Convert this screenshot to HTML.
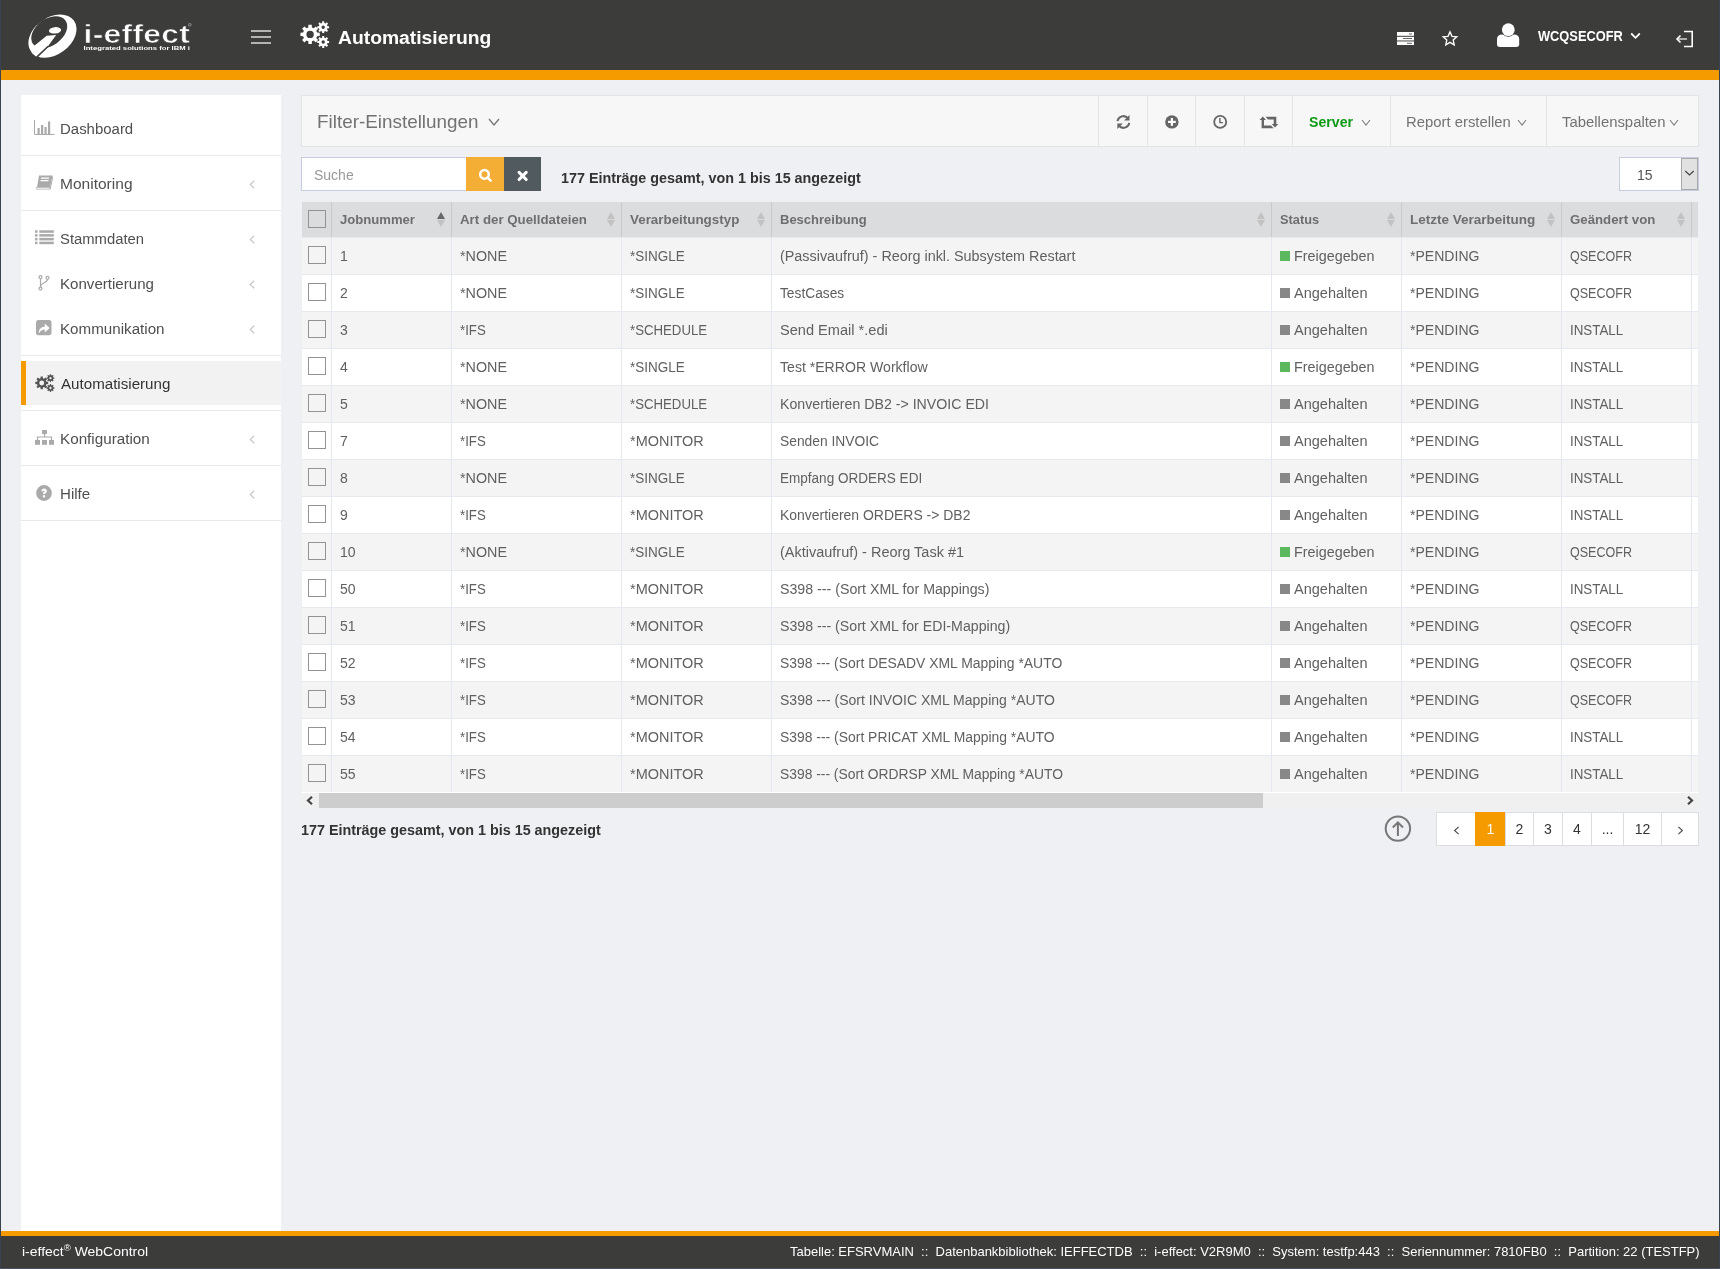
<!DOCTYPE html><html><head><meta charset="utf-8"><title>i-effect WebControl</title><style>
*{margin:0;padding:0;box-sizing:border-box}
html,body{width:1720px;height:1269px;overflow:hidden;background:#eff0f4;font-family:"Liberation Sans",sans-serif;position:relative}
body{will-change:transform}
.abs{position:absolute}
.frameL{position:absolute;left:0;top:0;width:1px;height:1269px;background:#3a4250;z-index:50}
.frameR{position:absolute;left:1719px;top:0;width:1px;height:1269px;background:#3a4250;z-index:50}
.frameB{position:absolute;left:0;top:1268px;width:1720px;height:1px;background:#4a5260;z-index:50}
#hdr{position:absolute;left:0;top:0;width:1720px;height:70px;background:#3c3c3b}
#hbar{position:absolute;left:0;top:70px;width:1720px;height:10px;background:#f59b00}
.htitle{position:absolute;left:338px;top:27px;font-size:18px;font-weight:bold;color:#fff;line-height:22px;white-space:nowrap}
.huser{position:absolute;left:1538px;top:26px;font-size:14px;font-weight:bold;color:#fff;line-height:20px;white-space:nowrap}
#side{position:absolute;left:21px;top:95px;width:260px;height:1136px;background:#fff}
.sep{position:absolute;left:0;width:260px;height:1px;background:#e9e9e9}
.sitem{position:absolute;left:39px;font-size:14px;color:#4f4f4f;line-height:18px;white-space:nowrap}
.sarr{position:absolute;left:228px;width:6px;height:9px}
.sico{position:absolute}
#act{position:absolute;left:0;top:266px;width:260px;height:44px;background:#f2f2f2;border-left:5px solid #f59b00}
#filt{position:absolute;left:301px;top:95px;width:1398px;height:52px;background:#f7f7f7;border:1px solid #e4e4e4}
.fdiv{position:absolute;top:0;width:1px;height:50px;background:#e4e4e4}
.ftxt{position:absolute;font-size:14px;color:#727272;line-height:18px;white-space:nowrap}
.chev{position:absolute}
#srch{position:absolute;left:301px;top:157px;width:166px;height:34px;background:#fff;border:1px solid #c6cddd}
.ph{position:absolute;left:12px;top:8px;font-size:14px;color:#999;line-height:18px}
#sbtn{position:absolute;left:466px;top:157px;width:38px;height:34px;background:#f5ae35}
#xbtn{position:absolute;left:504px;top:157px;width:37px;height:34px;background:#515a5f}
.info{position:absolute;font-size:14px;font-weight:bold;color:#333;line-height:18px;white-space:nowrap}
#sel{position:absolute;left:1619px;top:157px;width:80px;height:34px;background:#fff;border:1px solid #c6cddd}
.tbl{position:absolute;left:0;top:0}
.th{position:absolute;left:302px;width:1396px;height:35px;background:#dbdcde}
.thd{position:absolute;top:202px;width:1px;height:35px;background:#cacaca}
.htx{position:absolute;top:211px;font-size:13px;font-weight:bold;color:#6e6e6e;line-height:18px;white-space:nowrap}
.sup,.sdn{position:absolute;width:0;height:0;border-left:4.5px solid transparent;border-right:4.5px solid transparent}
.sup{top:212px;border-bottom:7px solid #c2c2c2}
.sup.act{border-bottom-color:#666}
.sdn{top:220px;border-top:7px solid #c2c2c2}
.cb{position:absolute;width:18px;height:18px;border:1px solid #939393;background:transparent}
.hcb{background:#dbdcde}
.row{position:absolute;left:302px;width:1396px;height:37px;border-top:1px solid #e6eaf0}
.row.odd{background:#f4f4f4}
.row.even{background:#fff}
.td{position:absolute;top:9px;font-size:14px;color:#606060;line-height:18px;white-space:nowrap}
.vd{position:absolute;top:-1px;width:1px;height:37px;background:#e5e9ef}
.sq{position:absolute;top:13px;width:10px;height:10px}
.sq.g{background:#5cb85c}
.sq.k{background:#888}
#scr{position:absolute;left:301px;top:792px;width:1398px;height:17px;background:#f0f0f0;border-top:1px solid #fff}
#thumb{position:absolute;left:18px;top:0;width:944px;height:15px;background:#cdcdcd}
.pg{position:absolute;top:812px;height:34px;border:1px solid #ddd;background:#fff;color:#333;font-size:14px;line-height:32px;text-align:center}
.pg.on{background:#f59b00;border-color:#f59b00;color:#fff}
#ftbar{position:absolute;left:0;top:1231px;width:1720px;height:5px;background:#f59b00}
#ft{position:absolute;left:0;top:1236px;width:1720px;height:33px;background:#3c3c3b}
.fttx{position:absolute;top:8px;font-size:13px;color:#fff;line-height:16px;white-space:nowrap}

</style></head><body>
<div class="frameL"></div><div class="frameR"></div><div class="frameB"></div>
<div id="hdr">
<svg class="abs" style="left:24px;top:12px" width="58" height="48" viewBox="0 0 1533 1269">
<ellipse cx="752" cy="636" rx="700" ry="492" transform="rotate(-36 752 636)" fill="#fff"/>
<ellipse cx="667" cy="535" rx="530" ry="350" transform="rotate(-36 667 535)" fill="#3c3c3b"/>
<path d="M350,345 L150,300 L420,40 L585,172 Z" fill="#3c3c3b"/>
<path d="M290,880 L600,625 L850,610 L620,925 L330,1190 L200,1080 Z" fill="#fff"/>
<path d="M640,905 L330,1200" stroke="#3c3c3b" stroke-width="42"/>
<ellipse cx="820" cy="485" rx="162" ry="85" transform="rotate(-6 820 485)" fill="#fff"/>
</svg>
<svg class="abs" style="left:80px;top:18px" width="120" height="36" viewBox="0 0 120 36">
<text x="2.8" y="24.7" transform="scale(1.25,1)" font-family="Liberation Sans" font-weight="bold" font-size="25.5" fill="#fff" stroke="#3c3c3b" stroke-width="0.6" textLength="85.2" lengthAdjust="spacing">i-effect</text>
<circle cx="109.8" cy="6.8" r="1.3" fill="none" stroke="#ddd" stroke-width="0.5"/>
<text x="3.5" y="31.9" font-family="Liberation Sans" font-weight="bold" font-size="5.4" fill="#fff" textLength="106.5" lengthAdjust="spacingAndGlyphs">Integrated solutions for IBM i</text>
</svg>

<div class="abs" style="left:251px;top:30px;width:20px;height:2px;background:#b4b4b4"></div>
<div class="abs" style="left:251px;top:36px;width:20px;height:2px;background:#b4b4b4"></div>
<div class="abs" style="left:251px;top:42px;width:20px;height:2px;background:#b4b4b4"></div>
<svg class="abs" style="left:300px;top:21px" width="30" height="27" viewBox="0 0 30 27"><path fill-rule="evenodd" fill="#fff" d="M17.07,11.61 L19.75,11.72 L19.75,15.08 L17.07,15.19 L16.30,17.07 L18.12,19.04 L15.74,21.42 L13.77,19.60 L11.89,20.37 L11.78,23.05 L8.42,23.05 L8.31,20.37 L6.43,19.60 L4.46,21.42 L2.08,19.04 L3.90,17.07 L3.13,15.19 L0.45,15.08 L0.45,11.72 L3.13,11.61 L3.90,9.73 L2.08,7.76 L4.46,5.38 L6.43,7.20 L8.31,6.43 L8.42,3.75 L11.78,3.75 L11.89,6.43 L13.77,7.20 L15.74,5.38 L18.12,7.76 L16.30,9.73Z M13.80,13.40 A3.7,3.7 0 1 0 6.40,13.40 A3.7,3.7 0 1 0 13.80,13.40Z M27.47,5.14 L29.12,5.21 L29.12,7.19 L27.47,7.26 L26.97,8.47 L28.08,9.69 L26.69,11.08 L25.47,9.97 L24.26,10.47 L24.19,12.12 L22.21,12.12 L22.14,10.47 L20.93,9.97 L19.71,11.08 L18.32,9.69 L19.43,8.47 L18.93,7.26 L17.28,7.19 L17.28,5.21 L18.93,5.14 L19.43,3.93 L18.32,2.71 L19.71,1.32 L20.93,2.43 L22.14,1.93 L22.21,0.28 L24.19,0.28 L24.26,1.93 L25.47,2.43 L26.69,1.32 L28.08,2.71 L26.97,3.93Z M24.90,6.20 A1.7,1.7 0 1 0 21.50,6.20 A1.7,1.7 0 1 0 24.90,6.20Z M27.47,19.94 L29.12,20.01 L29.12,21.99 L27.47,22.06 L26.97,23.27 L28.08,24.49 L26.69,25.88 L25.47,24.77 L24.26,25.27 L24.19,26.92 L22.21,26.92 L22.14,25.27 L20.93,24.77 L19.71,25.88 L18.32,24.49 L19.43,23.27 L18.93,22.06 L17.28,21.99 L17.28,20.01 L18.93,19.94 L19.43,18.73 L18.32,17.51 L19.71,16.12 L20.93,17.23 L22.14,16.73 L22.21,15.08 L24.19,15.08 L24.26,16.73 L25.47,17.23 L26.69,16.12 L28.08,17.51 L26.97,18.73Z M24.90,21.00 A1.7,1.7 0 1 0 21.50,21.00 A1.7,1.7 0 1 0 24.90,21.00Z"/></svg>
<div id="t1" class="htitle" style=";transform:scaleX(1.0718);transform-origin:0 50%">Automatisierung</div>
<svg class="abs" style="left:1397px;top:32px" width="18" height="13" viewBox="0 0 18 13">
<rect x="0" y="0" width="17" height="3.8" fill="#fff"/><rect x="0" y="4.8" width="17" height="3.6" fill="#fff"/>
<rect x="0" y="8.4" width="17" height="1.3" fill="#aaa"/><rect x="0" y="9.7" width="17" height="3.3" fill="#fff"/>
<rect x="12" y="1.5" width="3" height="0.9" fill="#555"/><rect x="6" y="6.1" width="9" height="0.9" fill="#555"/><rect x="10" y="10.8" width="5" height="0.9" fill="#555"/>
</svg>
<svg class="abs" style="left:1441px;top:30px" width="18" height="17" viewBox="0 0 18 17">
<path d="M9,1.9 L11,6.3 L15.8,6.8 L12.2,10 L13.2,14.8 L9,12.3 L4.8,14.8 L5.8,10 L2.2,6.8 L7,6.3 Z" fill="none" stroke="#fff" stroke-width="1.35" stroke-linejoin="miter"/>
</svg>
<svg class="abs" style="left:1496px;top:23px" width="24" height="25" viewBox="0 0 24 25">
<path d="M1,16.2 C1,13.2 3,11.6 6,11.6 L18.2,11.6 C21.2,11.6 23.2,13.2 23.2,16.2 L23.2,21.6 C23.2,23.1 22,24.1 20.5,24.1 L3.7,24.1 C2.2,24.1 1,23.1 1,21.6 Z" fill="#fff"/>
<circle cx="12.3" cy="6.7" r="7.1" fill="#3c3c3b"/><circle cx="12.3" cy="6.7" r="6.4" fill="#fff"/>
</svg>
<div id="t2" class="huser" style=";transform:scaleX(0.9163);transform-origin:0 50%">WCQSECOFR</div>
<svg class="abs" style="left:1630px;top:32px" width="11" height="8" viewBox="0 0 11 8"><path d="M1.2,1.5 L5.5,5.8 L9.8,1.5" fill="none" stroke="#fff" stroke-width="1.8"/></svg>
<svg class="abs" style="left:1675px;top:30px" width="20" height="18" viewBox="0 0 20 18">
<path d="M9,1.5 L17.2,1.5 L17.2,16.5 L9,16.5" fill="none" stroke="#fff" stroke-width="1.6"/>
<path d="M2,9 L12,9" stroke="#ccc" stroke-width="1.6"/><path d="M5.5,5.5 L2,9 L5.5,12.5" fill="none" stroke="#fff" stroke-width="1.6"/>
</svg>
</div><div id="hbar"></div>
<div id="side">
<div class="sep" style="top:60px"></div>
<div class="sep" style="top:115px"></div>
<div class="sep" style="top:260px"></div>
<div class="sep" style="top:315px"></div>
<div class="sep" style="top:370px"></div>
<div class="sep" style="top:425px"></div>
<div id="act"></div>
<div id="t3" class="sitem" style="top:25px;transform:scaleX(1.0687);transform-origin:0 50%">Dashboard</div>
<div id="t4" class="sitem" style="top:80px;transform:scaleX(1.1094);transform-origin:0 50%">Monitoring</div>
<svg class="sarr" style="top:85px" width="6" height="9" viewBox="0 0 6 9"><path d="M5.2,0.7 L1.2,4.5 L5.2,8.3" fill="none" stroke="#c8c8c8" stroke-width="1.2"/></svg>
<div id="t5" class="sitem" style="top:135px;transform:scaleX(1.0596);transform-origin:0 50%">Stammdaten</div>
<svg class="sarr" style="top:140px" width="6" height="9" viewBox="0 0 6 9"><path d="M5.2,0.7 L1.2,4.5 L5.2,8.3" fill="none" stroke="#c8c8c8" stroke-width="1.2"/></svg>
<div id="t6" class="sitem" style="top:180px;transform:scaleX(1.0780);transform-origin:0 50%">Konvertierung</div>
<svg class="sarr" style="top:185px" width="6" height="9" viewBox="0 0 6 9"><path d="M5.2,0.7 L1.2,4.5 L5.2,8.3" fill="none" stroke="#c8c8c8" stroke-width="1.2"/></svg>
<div id="t7" class="sitem" style="top:225px;transform:scaleX(1.0832);transform-origin:0 50%">Kommunikation</div>
<svg class="sarr" style="top:230px" width="6" height="9" viewBox="0 0 6 9"><path d="M5.2,0.7 L1.2,4.5 L5.2,8.3" fill="none" stroke="#c8c8c8" stroke-width="1.2"/></svg>
<div id="t8" class="sitem" style="top:335px;transform:scaleX(1.0877);transform-origin:0 50%">Konfiguration</div>
<svg class="sarr" style="top:340px" width="6" height="9" viewBox="0 0 6 9"><path d="M5.2,0.7 L1.2,4.5 L5.2,8.3" fill="none" stroke="#c8c8c8" stroke-width="1.2"/></svg>
<div id="t9" class="sitem" style="top:390px;transform:scaleX(1.0783);transform-origin:0 50%">Hilfe</div>
<svg class="sarr" style="top:395px" width="6" height="9" viewBox="0 0 6 9"><path d="M5.2,0.7 L1.2,4.5 L5.2,8.3" fill="none" stroke="#c8c8c8" stroke-width="1.2"/></svg>
<div id="t10" class="sitem" style="top:280px;left:40px;color:#333;transform:scaleX(1.0812);transform-origin:0 50%">Automatisierung</div>
<svg class="sico" style="left:13px;top:25px" width="21" height="15" viewBox="0 0 21 15">
<path d="M0.5,0 L0.5,14.5 L20.5,14.5" fill="none" stroke="#aaa" stroke-width="1"/>
<rect x="3.5" y="8" width="2.2" height="6" fill="#aaa"/><rect x="7" y="5" width="2.2" height="9" fill="#aaa"/><rect x="10.5" y="7" width="2.2" height="7" fill="#aaa"/><rect x="14" y="1.5" width="2.2" height="12.5" fill="#aaa"/>
</svg>
<svg class="sico" style="left:14px;top:80px" width="19" height="16" viewBox="0 0 19 16">
<path d="M4,0.5 L17.5,0.5 L15,12.5 L2,12.5 Z" fill="#aaa"/>
<path d="M2,12.5 L15,12.5 L17.5,1 L18.2,2 L15.6,14.6 L1.6,14.6 C0.6,14.6 0.6,13 1.2,12 Z" fill="#aaa"/>
<path d="M1.2,13.6 L14.6,13.6" stroke="#fff" stroke-width="0.8"/>
<rect x="6" y="2.5" width="8" height="1.3" fill="#fff"/><rect x="5.5" y="5" width="8" height="1.3" fill="#fff"/>
</svg>
<svg class="sico" style="left:14px;top:135px" width="19" height="15" viewBox="0 0 19 15">
<rect x="0" y="0.3" width="2.5" height="2.5" fill="#aaa"/><rect x="0" y="4.1" width="2.5" height="2.5" fill="#aaa"/><rect x="0" y="7.9" width="2.5" height="2.5" fill="#aaa"/><rect x="0" y="11.7" width="2.5" height="2.5" fill="#aaa"/>
<rect x="4.3" y="0.3" width="14.5" height="2.5" fill="#aaa"/><rect x="4.3" y="4.1" width="14.5" height="2.5" fill="#aaa"/><rect x="4.3" y="7.9" width="14.5" height="2.5" fill="#aaa"/><rect x="4.3" y="11.7" width="14.5" height="2.5" fill="#aaa"/>
</svg>
<svg class="sico" style="left:17px;top:180px" width="12" height="16" viewBox="0 0 12 16">
<g fill="none" stroke="#aaa" stroke-width="1.2">
<circle cx="2.5" cy="2.2" r="1.5"/><circle cx="2.5" cy="13.6" r="1.5"/><circle cx="9.5" cy="2.8" r="1.5"/>
<path d="M2.5,3.7 L2.5,12.1"/><path d="M9.5,4.3 C9.5,8 2.8,8 2.5,11"/>
</g></svg>
<svg class="sico" style="left:15px;top:225px" width="16" height="16" viewBox="0 0 16 16">
<rect x="0" y="0" width="15.5" height="15.2" rx="2.6" fill="#aaa"/>
<path d="M2.8,13.4 C2.8,9 5,6.8 8.8,6.8 L8.8,3.6 L13.6,8 L8.8,12.4 L8.8,9.4 C6.2,9.4 4.3,10.6 2.8,13.4 Z" fill="#fff"/>
</svg>

<svg class="sico" style="left:14px;top:335px" width="19" height="15" viewBox="0 0 19 15">
<rect x="7" y="0" width="5" height="4" fill="#aaa"/>
<path d="M9.5,4 L9.5,7 M2.5,10 L2.5,7 L16.5,7 L16.5,10" fill="none" stroke="#aaa" stroke-width="1.2"/>
<rect x="0" y="10" width="5" height="4.8" fill="#aaa"/><rect x="7" y="10" width="5" height="4.8" fill="#aaa"/><rect x="14" y="10" width="5" height="4.8" fill="#aaa"/>
</svg>
<svg class="sico" style="left:15px;top:390px" width="16" height="16" viewBox="0 0 16 16">
<circle cx="8" cy="8" r="7.9" fill="#aaa"/>
<path d="M5.4,6.2 C5.4,4.5 6.6,3.6 8.1,3.6 C9.7,3.6 10.9,4.6 10.9,6 C10.9,7.6 9.2,7.9 9.2,9.1 L6.9,9.1 C6.9,7.3 8.6,7 8.6,6.1 C8.6,5.6 8.3,5.4 8,5.4 C7.5,5.4 7.3,5.8 7.3,6.4 Z" fill="#fff"/>
<rect x="6.9" y="10.2" width="2.3" height="2.2" fill="#fff"/>
</svg>

<svg class="sico" style="left:14px;top:279px" width="20" height="18" viewBox="0 0 30 27"><path fill-rule="evenodd" fill="#555" d="M17.07,11.61 L19.75,11.72 L19.75,15.08 L17.07,15.19 L16.30,17.07 L18.12,19.04 L15.74,21.42 L13.77,19.60 L11.89,20.37 L11.78,23.05 L8.42,23.05 L8.31,20.37 L6.43,19.60 L4.46,21.42 L2.08,19.04 L3.90,17.07 L3.13,15.19 L0.45,15.08 L0.45,11.72 L3.13,11.61 L3.90,9.73 L2.08,7.76 L4.46,5.38 L6.43,7.20 L8.31,6.43 L8.42,3.75 L11.78,3.75 L11.89,6.43 L13.77,7.20 L15.74,5.38 L18.12,7.76 L16.30,9.73Z M13.80,13.40 A3.7,3.7 0 1 0 6.40,13.40 A3.7,3.7 0 1 0 13.80,13.40Z M27.47,5.14 L29.12,5.21 L29.12,7.19 L27.47,7.26 L26.97,8.47 L28.08,9.69 L26.69,11.08 L25.47,9.97 L24.26,10.47 L24.19,12.12 L22.21,12.12 L22.14,10.47 L20.93,9.97 L19.71,11.08 L18.32,9.69 L19.43,8.47 L18.93,7.26 L17.28,7.19 L17.28,5.21 L18.93,5.14 L19.43,3.93 L18.32,2.71 L19.71,1.32 L20.93,2.43 L22.14,1.93 L22.21,0.28 L24.19,0.28 L24.26,1.93 L25.47,2.43 L26.69,1.32 L28.08,2.71 L26.97,3.93Z M24.90,6.20 A1.7,1.7 0 1 0 21.50,6.20 A1.7,1.7 0 1 0 24.90,6.20Z M27.47,19.94 L29.12,20.01 L29.12,21.99 L27.47,22.06 L26.97,23.27 L28.08,24.49 L26.69,25.88 L25.47,24.77 L24.26,25.27 L24.19,26.92 L22.21,26.92 L22.14,25.27 L20.93,24.77 L19.71,25.88 L18.32,24.49 L19.43,23.27 L18.93,22.06 L17.28,21.99 L17.28,20.01 L18.93,19.94 L19.43,18.73 L18.32,17.51 L19.71,16.12 L20.93,17.23 L22.14,16.73 L22.21,15.08 L24.19,15.08 L24.26,16.73 L25.47,17.23 L26.69,16.12 L28.08,17.51 L26.97,18.73Z M24.90,21.00 A1.7,1.7 0 1 0 21.50,21.00 A1.7,1.7 0 1 0 24.90,21.00Z"/></svg>
</div>
<div id="filt">
<div class="fdiv" style="left:796px"></div>
<div class="fdiv" style="left:845px"></div>
<div class="fdiv" style="left:893px"></div>
<div class="fdiv" style="left:942px"></div>
<div class="fdiv" style="left:990px"></div>
<div class="fdiv" style="left:1088px"></div>
<div class="fdiv" style="left:1244px"></div>
<div id="t11" class="ftxt" style="left:15px;top:14px;font-size:19px;line-height:24px;transform:scaleX(0.9932);transform-origin:0 50%">Filter-Einstellungen</div>
<svg class="chev" style="left:186px;top:22px" width="12" height="8" viewBox="0 0 12 8"><path d="M1,1 L6.0,7 L11,1" fill="none" stroke="#777" stroke-width="1.35"/></svg>
<div id="t12" class="ftxt" style="left:1007px;top:17px;font-weight:bold;color:#0f9a16;transform:scaleX(1.0094);transform-origin:0 50%">Server</div>
<svg class="chev" style="left:1059px;top:23px" width="10" height="7" viewBox="0 0 10 7"><path d="M1,1 L5.0,6 L9,1" fill="none" stroke="#808080" stroke-width="1.15"/></svg>
<div id="t13" class="ftxt" style="left:1104px;top:17px;transform:scaleX(1.0609);transform-origin:0 50%">Report erstellen</div>
<svg class="chev" style="left:1215px;top:23px" width="10" height="7" viewBox="0 0 10 7"><path d="M1,1 L5.0,6 L9,1" fill="none" stroke="#808080" stroke-width="1.15"/></svg>
<div id="t14" class="ftxt" style="left:1260px;top:17px;transform:scaleX(1.0629);transform-origin:0 50%">Tabellenspalten</div>
<svg class="chev" style="left:1367px;top:23px" width="10" height="7" viewBox="0 0 10 7"><path d="M1,1 L5.0,6 L9,1" fill="none" stroke="#808080" stroke-width="1.15"/></svg>
<svg class="abs" style="left:813px;top:18px" width="17" height="16" viewBox="0 0 17 16">
<g fill="none" stroke="#666" stroke-width="2">
<path d="M2.5,7.2 A6,6 0 0 1 13,4.3"/><path d="M14.3,8.8 A6,6 0 0 1 3.8,11.7"/></g>
<path d="M14.5,1 L14.5,6.5 L9,6.5 Z" fill="#666"/><path d="M2.3,15 L2.3,9.5 L7.8,9.5 Z" fill="#666"/>
</svg>
<svg class="abs" style="left:862px;top:18px" width="16" height="16" viewBox="0 0 16 16">
<circle cx="7.9" cy="7.9" r="6.7" fill="#666"/><rect x="6.8" y="4" width="2.2" height="7.8" fill="#fff"/><rect x="4" y="6.8" width="7.8" height="2.2" fill="#fff"/>
</svg>
<svg class="abs" style="left:910px;top:18px" width="16" height="16" viewBox="0 0 16 16">
<circle cx="8.2" cy="7.9" r="6" fill="none" stroke="#666" stroke-width="1.8"/><path d="M7.9,4 L7.9,8.6 L11,8.6" fill="none" stroke="#666" stroke-width="1.4"/>
</svg>
<svg class="abs" style="left:957px;top:20px" width="20" height="13" viewBox="0 0 20 13">
<path d="M0.5,4 L3.8,0.6 L7,4 L5,4 L5,9.6 L12,9.6 L14.6,12.3 L2.6,12.3 L2.6,4 Z" fill="#666"/>
<path d="M6.5,0.8 L17.3,0.8 L17.3,8 L19.3,8 L16,11.6 L12.7,8 L14.7,8 L14.7,3.4 L9,3.4 Z" fill="#666"/>
</svg>

</div>
<div id="srch"><div class="ph">Suche</div></div>
<div id="sbtn"><svg class="abs" style="left:10px;top:9px" width="18" height="17" viewBox="0 0 18 17">
<circle cx="8.5" cy="8.4" r="4.3" fill="none" stroke="#fff" stroke-width="2.5"/><path d="M11.6,11.6 L14.6,14.6" stroke="#fff" stroke-width="2.6" stroke-linecap="round"/></svg></div>
<div id="xbtn"><svg class="abs" style="left:12px;top:12px" width="13" height="13" viewBox="0 0 13 13">
<path d="M3.1,3.4 L10.2,10.5 M10.2,3.4 L3.1,10.5" stroke="#fff" stroke-width="3.1" stroke-linecap="round"/></svg></div>
<div id="t15" class="info" style="left:561px;top:169px;transform:scaleX(1.0246);transform-origin:0 50%">177 Einträge gesamt, von 1 bis 15 angezeigt</div>
<div id="sel"><div class="abs" style="left:17px;top:8px;font-size:14px;color:#555;line-height:18px">15</div>
<div class="abs" style="left:61px;top:0px;width:17px;height:32px;background:#e1e1e1;border:1px solid #a8a8a8"></div>
<svg class="abs" style="left:64px;top:12px" width="11" height="7" viewBox="0 0 11 7"><path d="M1.3,1 L5.5,5 L9.7,1" fill="none" stroke="#444" stroke-width="1.2"/></svg>
</div>
<div class="th" style="top:202px"></div>
<div class="thd" style="left:331px"></div>
<div class="thd" style="left:451px"></div>
<div class="thd" style="left:621px"></div>
<div class="thd" style="left:771px"></div>
<div class="thd" style="left:1271px"></div>
<div class="thd" style="left:1401px"></div>
<div class="thd" style="left:1561px"></div>
<div class="thd" style="left:1691px"></div>
<div class="cb hcb" style="left:308px;top:210px"></div>
<div id="t16" class="htx" style="left:340px;transform:scaleX(1.0068);transform-origin:0 50%">Jobnummer</div>
<div class="sup act" style="left:437px"></div><div class="sdn" style="left:437px"></div>
<div id="t17" class="htx" style="left:460px;transform:scaleX(1.0218);transform-origin:0 50%">Art der Quelldateien</div>
<div class="sup" style="left:607px"></div><div class="sdn" style="left:607px"></div>
<div id="t18" class="htx" style="left:630px;transform:scaleX(1.0293);transform-origin:0 50%">Verarbeitungstyp</div>
<div class="sup" style="left:757px"></div><div class="sdn" style="left:757px"></div>
<div id="t19" class="htx" style="left:780px;transform:scaleX(1.0001);transform-origin:0 50%">Beschreibung</div>
<div class="sup" style="left:1257px"></div><div class="sdn" style="left:1257px"></div>
<div id="t20" class="htx" style="left:1280px;transform:scaleX(0.9825);transform-origin:0 50%">Status</div>
<div class="sup" style="left:1387px"></div><div class="sdn" style="left:1387px"></div>
<div id="t21" class="htx" style="left:1410px;transform:scaleX(1.0392);transform-origin:0 50%">Letzte Verarbeitung</div>
<div class="sup" style="left:1547px"></div><div class="sdn" style="left:1547px"></div>
<div id="t22" class="htx" style="left:1570px;transform:scaleX(1.0181);transform-origin:0 50%">Geändert von</div>
<div class="sup" style="left:1677px"></div><div class="sdn" style="left:1677px"></div>
<div class="row odd" style="top:237px">
<div class="cb" style="left:6px;top:8px"></div>
<div class="td" style="left:38px">1</div>
<div id="t23" class="td" style="left:158px;transform:scaleX(1.0241);transform-origin:0 50%">*NONE</div>
<div id="t24" class="td" style="left:328px;transform:scaleX(0.9632);transform-origin:0 50%">*SINGLE</div>
<div id="t25" class="td" style="left:478px;transform:scaleX(1.0261);transform-origin:0 50%">(Passivaufruf) - Reorg inkl. Subsystem Restart</div>
<div class="sq g" style="left:978px"></div>
<div id="t26" class="td" style="left:992px;transform:scaleX(1.0247);transform-origin:0 50%">Freigegeben</div>
<div id="t27" class="td" style="left:1108px;transform:scaleX(1.0030);transform-origin:0 50%">*PENDING</div>
<div id="t28" class="td" style="left:1268px;transform:scaleX(0.8957);transform-origin:0 50%">QSECOFR</div>
<div class="vd" style="left:29px"></div>
<div class="vd" style="left:149px"></div>
<div class="vd" style="left:319px"></div>
<div class="vd" style="left:469px"></div>
<div class="vd" style="left:969px"></div>
<div class="vd" style="left:1099px"></div>
<div class="vd" style="left:1259px"></div>
<div class="vd" style="left:1389px"></div>
</div>
<div class="row even" style="top:274px">
<div class="cb" style="left:6px;top:8px"></div>
<div class="td" style="left:38px">2</div>
<div id="t29" class="td" style="left:158px;transform:scaleX(1.0241);transform-origin:0 50%">*NONE</div>
<div id="t30" class="td" style="left:328px;transform:scaleX(0.9632);transform-origin:0 50%">*SINGLE</div>
<div id="t31" class="td" style="left:478px;transform:scaleX(0.9816);transform-origin:0 50%">TestCases</div>
<div class="sq k" style="left:978px"></div>
<div id="t32" class="td" style="left:992px;transform:scaleX(1.0372);transform-origin:0 50%">Angehalten</div>
<div id="t33" class="td" style="left:1108px;transform:scaleX(1.0030);transform-origin:0 50%">*PENDING</div>
<div id="t34" class="td" style="left:1268px;transform:scaleX(0.8957);transform-origin:0 50%">QSECOFR</div>
<div class="vd" style="left:29px"></div>
<div class="vd" style="left:149px"></div>
<div class="vd" style="left:319px"></div>
<div class="vd" style="left:469px"></div>
<div class="vd" style="left:969px"></div>
<div class="vd" style="left:1099px"></div>
<div class="vd" style="left:1259px"></div>
<div class="vd" style="left:1389px"></div>
</div>
<div class="row odd" style="top:311px">
<div class="cb" style="left:6px;top:8px"></div>
<div class="td" style="left:38px">3</div>
<div id="t35" class="td" style="left:158px;transform:scaleX(0.9448);transform-origin:0 50%">*IFS</div>
<div id="t36" class="td" style="left:328px;transform:scaleX(0.9440);transform-origin:0 50%">*SCHEDULE</div>
<div id="t37" class="td" style="left:478px;transform:scaleX(1.0409);transform-origin:0 50%">Send Email *.edi</div>
<div class="sq k" style="left:978px"></div>
<div id="t38" class="td" style="left:992px;transform:scaleX(1.0372);transform-origin:0 50%">Angehalten</div>
<div id="t39" class="td" style="left:1108px;transform:scaleX(1.0030);transform-origin:0 50%">*PENDING</div>
<div id="t40" class="td" style="left:1268px;transform:scaleX(0.9546);transform-origin:0 50%">INSTALL</div>
<div class="vd" style="left:29px"></div>
<div class="vd" style="left:149px"></div>
<div class="vd" style="left:319px"></div>
<div class="vd" style="left:469px"></div>
<div class="vd" style="left:969px"></div>
<div class="vd" style="left:1099px"></div>
<div class="vd" style="left:1259px"></div>
<div class="vd" style="left:1389px"></div>
</div>
<div class="row even" style="top:348px">
<div class="cb" style="left:6px;top:8px"></div>
<div class="td" style="left:38px">4</div>
<div id="t41" class="td" style="left:158px;transform:scaleX(1.0241);transform-origin:0 50%">*NONE</div>
<div id="t42" class="td" style="left:328px;transform:scaleX(0.9632);transform-origin:0 50%">*SINGLE</div>
<div id="t43" class="td" style="left:478px;transform:scaleX(1.0061);transform-origin:0 50%">Test *ERROR Workflow</div>
<div class="sq g" style="left:978px"></div>
<div id="t44" class="td" style="left:992px;transform:scaleX(1.0247);transform-origin:0 50%">Freigegeben</div>
<div id="t45" class="td" style="left:1108px;transform:scaleX(1.0030);transform-origin:0 50%">*PENDING</div>
<div id="t46" class="td" style="left:1268px;transform:scaleX(0.9546);transform-origin:0 50%">INSTALL</div>
<div class="vd" style="left:29px"></div>
<div class="vd" style="left:149px"></div>
<div class="vd" style="left:319px"></div>
<div class="vd" style="left:469px"></div>
<div class="vd" style="left:969px"></div>
<div class="vd" style="left:1099px"></div>
<div class="vd" style="left:1259px"></div>
<div class="vd" style="left:1389px"></div>
</div>
<div class="row odd" style="top:385px">
<div class="cb" style="left:6px;top:8px"></div>
<div class="td" style="left:38px">5</div>
<div id="t47" class="td" style="left:158px;transform:scaleX(1.0241);transform-origin:0 50%">*NONE</div>
<div id="t48" class="td" style="left:328px;transform:scaleX(0.9440);transform-origin:0 50%">*SCHEDULE</div>
<div id="t49" class="td" style="left:478px;transform:scaleX(1.0117);transform-origin:0 50%">Konvertieren DB2 -&gt; INVOIC EDI</div>
<div class="sq k" style="left:978px"></div>
<div id="t50" class="td" style="left:992px;transform:scaleX(1.0372);transform-origin:0 50%">Angehalten</div>
<div id="t51" class="td" style="left:1108px;transform:scaleX(1.0030);transform-origin:0 50%">*PENDING</div>
<div id="t52" class="td" style="left:1268px;transform:scaleX(0.9546);transform-origin:0 50%">INSTALL</div>
<div class="vd" style="left:29px"></div>
<div class="vd" style="left:149px"></div>
<div class="vd" style="left:319px"></div>
<div class="vd" style="left:469px"></div>
<div class="vd" style="left:969px"></div>
<div class="vd" style="left:1099px"></div>
<div class="vd" style="left:1259px"></div>
<div class="vd" style="left:1389px"></div>
</div>
<div class="row even" style="top:422px">
<div class="cb" style="left:6px;top:8px"></div>
<div class="td" style="left:38px">7</div>
<div id="t53" class="td" style="left:158px;transform:scaleX(0.9448);transform-origin:0 50%">*IFS</div>
<div id="t54" class="td" style="left:328px;transform:scaleX(1.0339);transform-origin:0 50%">*MONITOR</div>
<div id="t55" class="td" style="left:478px;transform:scaleX(0.9870);transform-origin:0 50%">Senden INVOIC</div>
<div class="sq k" style="left:978px"></div>
<div id="t56" class="td" style="left:992px;transform:scaleX(1.0372);transform-origin:0 50%">Angehalten</div>
<div id="t57" class="td" style="left:1108px;transform:scaleX(1.0030);transform-origin:0 50%">*PENDING</div>
<div id="t58" class="td" style="left:1268px;transform:scaleX(0.9546);transform-origin:0 50%">INSTALL</div>
<div class="vd" style="left:29px"></div>
<div class="vd" style="left:149px"></div>
<div class="vd" style="left:319px"></div>
<div class="vd" style="left:469px"></div>
<div class="vd" style="left:969px"></div>
<div class="vd" style="left:1099px"></div>
<div class="vd" style="left:1259px"></div>
<div class="vd" style="left:1389px"></div>
</div>
<div class="row odd" style="top:459px">
<div class="cb" style="left:6px;top:8px"></div>
<div class="td" style="left:38px">8</div>
<div id="t59" class="td" style="left:158px;transform:scaleX(1.0241);transform-origin:0 50%">*NONE</div>
<div id="t60" class="td" style="left:328px;transform:scaleX(0.9632);transform-origin:0 50%">*SINGLE</div>
<div id="t61" class="td" style="left:478px;transform:scaleX(0.9669);transform-origin:0 50%">Empfang ORDERS EDI</div>
<div class="sq k" style="left:978px"></div>
<div id="t62" class="td" style="left:992px;transform:scaleX(1.0372);transform-origin:0 50%">Angehalten</div>
<div id="t63" class="td" style="left:1108px;transform:scaleX(1.0030);transform-origin:0 50%">*PENDING</div>
<div id="t64" class="td" style="left:1268px;transform:scaleX(0.9546);transform-origin:0 50%">INSTALL</div>
<div class="vd" style="left:29px"></div>
<div class="vd" style="left:149px"></div>
<div class="vd" style="left:319px"></div>
<div class="vd" style="left:469px"></div>
<div class="vd" style="left:969px"></div>
<div class="vd" style="left:1099px"></div>
<div class="vd" style="left:1259px"></div>
<div class="vd" style="left:1389px"></div>
</div>
<div class="row even" style="top:496px">
<div class="cb" style="left:6px;top:8px"></div>
<div class="td" style="left:38px">9</div>
<div id="t65" class="td" style="left:158px;transform:scaleX(0.9448);transform-origin:0 50%">*IFS</div>
<div id="t66" class="td" style="left:328px;transform:scaleX(1.0339);transform-origin:0 50%">*MONITOR</div>
<div id="t67" class="td" style="left:478px;transform:scaleX(0.9969);transform-origin:0 50%">Konvertieren ORDERS -&gt; DB2</div>
<div class="sq k" style="left:978px"></div>
<div id="t68" class="td" style="left:992px;transform:scaleX(1.0372);transform-origin:0 50%">Angehalten</div>
<div id="t69" class="td" style="left:1108px;transform:scaleX(1.0030);transform-origin:0 50%">*PENDING</div>
<div id="t70" class="td" style="left:1268px;transform:scaleX(0.9546);transform-origin:0 50%">INSTALL</div>
<div class="vd" style="left:29px"></div>
<div class="vd" style="left:149px"></div>
<div class="vd" style="left:319px"></div>
<div class="vd" style="left:469px"></div>
<div class="vd" style="left:969px"></div>
<div class="vd" style="left:1099px"></div>
<div class="vd" style="left:1259px"></div>
<div class="vd" style="left:1389px"></div>
</div>
<div class="row odd" style="top:533px">
<div class="cb" style="left:6px;top:8px"></div>
<div class="td" style="left:38px">10</div>
<div id="t71" class="td" style="left:158px;transform:scaleX(1.0241);transform-origin:0 50%">*NONE</div>
<div id="t72" class="td" style="left:328px;transform:scaleX(0.9632);transform-origin:0 50%">*SINGLE</div>
<div id="t73" class="td" style="left:478px;transform:scaleX(1.0343);transform-origin:0 50%">(Aktivaufruf) - Reorg Task #1</div>
<div class="sq g" style="left:978px"></div>
<div id="t74" class="td" style="left:992px;transform:scaleX(1.0247);transform-origin:0 50%">Freigegeben</div>
<div id="t75" class="td" style="left:1108px;transform:scaleX(1.0030);transform-origin:0 50%">*PENDING</div>
<div id="t76" class="td" style="left:1268px;transform:scaleX(0.8957);transform-origin:0 50%">QSECOFR</div>
<div class="vd" style="left:29px"></div>
<div class="vd" style="left:149px"></div>
<div class="vd" style="left:319px"></div>
<div class="vd" style="left:469px"></div>
<div class="vd" style="left:969px"></div>
<div class="vd" style="left:1099px"></div>
<div class="vd" style="left:1259px"></div>
<div class="vd" style="left:1389px"></div>
</div>
<div class="row even" style="top:570px">
<div class="cb" style="left:6px;top:8px"></div>
<div class="td" style="left:38px">50</div>
<div id="t77" class="td" style="left:158px;transform:scaleX(0.9448);transform-origin:0 50%">*IFS</div>
<div id="t78" class="td" style="left:328px;transform:scaleX(1.0339);transform-origin:0 50%">*MONITOR</div>
<div id="t79" class="td" style="left:478px;transform:scaleX(1.0146);transform-origin:0 50%">S398 --- (Sort XML for Mappings)</div>
<div class="sq k" style="left:978px"></div>
<div id="t80" class="td" style="left:992px;transform:scaleX(1.0372);transform-origin:0 50%">Angehalten</div>
<div id="t81" class="td" style="left:1108px;transform:scaleX(1.0030);transform-origin:0 50%">*PENDING</div>
<div id="t82" class="td" style="left:1268px;transform:scaleX(0.9546);transform-origin:0 50%">INSTALL</div>
<div class="vd" style="left:29px"></div>
<div class="vd" style="left:149px"></div>
<div class="vd" style="left:319px"></div>
<div class="vd" style="left:469px"></div>
<div class="vd" style="left:969px"></div>
<div class="vd" style="left:1099px"></div>
<div class="vd" style="left:1259px"></div>
<div class="vd" style="left:1389px"></div>
</div>
<div class="row odd" style="top:607px">
<div class="cb" style="left:6px;top:8px"></div>
<div class="td" style="left:38px">51</div>
<div id="t83" class="td" style="left:158px;transform:scaleX(0.9448);transform-origin:0 50%">*IFS</div>
<div id="t84" class="td" style="left:328px;transform:scaleX(1.0339);transform-origin:0 50%">*MONITOR</div>
<div id="t85" class="td" style="left:478px;transform:scaleX(1.0119);transform-origin:0 50%">S398 --- (Sort XML for EDI-Mapping)</div>
<div class="sq k" style="left:978px"></div>
<div id="t86" class="td" style="left:992px;transform:scaleX(1.0372);transform-origin:0 50%">Angehalten</div>
<div id="t87" class="td" style="left:1108px;transform:scaleX(1.0030);transform-origin:0 50%">*PENDING</div>
<div id="t88" class="td" style="left:1268px;transform:scaleX(0.8957);transform-origin:0 50%">QSECOFR</div>
<div class="vd" style="left:29px"></div>
<div class="vd" style="left:149px"></div>
<div class="vd" style="left:319px"></div>
<div class="vd" style="left:469px"></div>
<div class="vd" style="left:969px"></div>
<div class="vd" style="left:1099px"></div>
<div class="vd" style="left:1259px"></div>
<div class="vd" style="left:1389px"></div>
</div>
<div class="row even" style="top:644px">
<div class="cb" style="left:6px;top:8px"></div>
<div class="td" style="left:38px">52</div>
<div id="t89" class="td" style="left:158px;transform:scaleX(0.9448);transform-origin:0 50%">*IFS</div>
<div id="t90" class="td" style="left:328px;transform:scaleX(1.0339);transform-origin:0 50%">*MONITOR</div>
<div id="t91" class="td" style="left:478px;transform:scaleX(0.9937);transform-origin:0 50%">S398 --- (Sort DESADV XML Mapping *AUTO</div>
<div class="sq k" style="left:978px"></div>
<div id="t92" class="td" style="left:992px;transform:scaleX(1.0372);transform-origin:0 50%">Angehalten</div>
<div id="t93" class="td" style="left:1108px;transform:scaleX(1.0030);transform-origin:0 50%">*PENDING</div>
<div id="t94" class="td" style="left:1268px;transform:scaleX(0.8957);transform-origin:0 50%">QSECOFR</div>
<div class="vd" style="left:29px"></div>
<div class="vd" style="left:149px"></div>
<div class="vd" style="left:319px"></div>
<div class="vd" style="left:469px"></div>
<div class="vd" style="left:969px"></div>
<div class="vd" style="left:1099px"></div>
<div class="vd" style="left:1259px"></div>
<div class="vd" style="left:1389px"></div>
</div>
<div class="row odd" style="top:681px">
<div class="cb" style="left:6px;top:8px"></div>
<div class="td" style="left:38px">53</div>
<div id="t95" class="td" style="left:158px;transform:scaleX(0.9448);transform-origin:0 50%">*IFS</div>
<div id="t96" class="td" style="left:328px;transform:scaleX(1.0339);transform-origin:0 50%">*MONITOR</div>
<div id="t97" class="td" style="left:478px;transform:scaleX(1.0007);transform-origin:0 50%">S398 --- (Sort INVOIC XML Mapping *AUTO</div>
<div class="sq k" style="left:978px"></div>
<div id="t98" class="td" style="left:992px;transform:scaleX(1.0372);transform-origin:0 50%">Angehalten</div>
<div id="t99" class="td" style="left:1108px;transform:scaleX(1.0030);transform-origin:0 50%">*PENDING</div>
<div id="t100" class="td" style="left:1268px;transform:scaleX(0.8957);transform-origin:0 50%">QSECOFR</div>
<div class="vd" style="left:29px"></div>
<div class="vd" style="left:149px"></div>
<div class="vd" style="left:319px"></div>
<div class="vd" style="left:469px"></div>
<div class="vd" style="left:969px"></div>
<div class="vd" style="left:1099px"></div>
<div class="vd" style="left:1259px"></div>
<div class="vd" style="left:1389px"></div>
</div>
<div class="row even" style="top:718px">
<div class="cb" style="left:6px;top:8px"></div>
<div class="td" style="left:38px">54</div>
<div id="t101" class="td" style="left:158px;transform:scaleX(0.9448);transform-origin:0 50%">*IFS</div>
<div id="t102" class="td" style="left:328px;transform:scaleX(1.0339);transform-origin:0 50%">*MONITOR</div>
<div id="t103" class="td" style="left:478px;transform:scaleX(0.9935);transform-origin:0 50%">S398 --- (Sort PRICAT XML Mapping *AUTO</div>
<div class="sq k" style="left:978px"></div>
<div id="t104" class="td" style="left:992px;transform:scaleX(1.0372);transform-origin:0 50%">Angehalten</div>
<div id="t105" class="td" style="left:1108px;transform:scaleX(1.0030);transform-origin:0 50%">*PENDING</div>
<div id="t106" class="td" style="left:1268px;transform:scaleX(0.9546);transform-origin:0 50%">INSTALL</div>
<div class="vd" style="left:29px"></div>
<div class="vd" style="left:149px"></div>
<div class="vd" style="left:319px"></div>
<div class="vd" style="left:469px"></div>
<div class="vd" style="left:969px"></div>
<div class="vd" style="left:1099px"></div>
<div class="vd" style="left:1259px"></div>
<div class="vd" style="left:1389px"></div>
</div>
<div class="row odd" style="top:755px">
<div class="cb" style="left:6px;top:8px"></div>
<div class="td" style="left:38px">55</div>
<div id="t107" class="td" style="left:158px;transform:scaleX(0.9448);transform-origin:0 50%">*IFS</div>
<div id="t108" class="td" style="left:328px;transform:scaleX(1.0339);transform-origin:0 50%">*MONITOR</div>
<div id="t109" class="td" style="left:478px;transform:scaleX(0.9892);transform-origin:0 50%">S398 --- (Sort ORDRSP XML Mapping *AUTO</div>
<div class="sq k" style="left:978px"></div>
<div id="t110" class="td" style="left:992px;transform:scaleX(1.0372);transform-origin:0 50%">Angehalten</div>
<div id="t111" class="td" style="left:1108px;transform:scaleX(1.0030);transform-origin:0 50%">*PENDING</div>
<div id="t112" class="td" style="left:1268px;transform:scaleX(0.9546);transform-origin:0 50%">INSTALL</div>
<div class="vd" style="left:29px"></div>
<div class="vd" style="left:149px"></div>
<div class="vd" style="left:319px"></div>
<div class="vd" style="left:469px"></div>
<div class="vd" style="left:969px"></div>
<div class="vd" style="left:1099px"></div>
<div class="vd" style="left:1259px"></div>
<div class="vd" style="left:1389px"></div>
</div>
<div id="scr"><div id="thumb"></div>
<svg class="abs" style="left:5px;top:3px" width="8" height="9" viewBox="0 0 8 9"><path d="M6,0.8 L2,4.5 L6,8.2" fill="none" stroke="#444" stroke-width="2.2"/></svg>
<svg class="abs" style="left:1385px;top:3px" width="8" height="9" viewBox="0 0 8 9"><path d="M2,0.8 L6,4.5 L2,8.2" fill="none" stroke="#444" stroke-width="2.2"/></svg>
</div>
<div id="t113" class="info" style="left:301px;top:821px;transform:scaleX(1.0246);transform-origin:0 50%">177 Einträge gesamt, von 1 bis 15 angezeigt</div>
<svg class="abs" style="left:1383px;top:814px" width="30" height="30" viewBox="0 0 30 30">
<circle cx="14.9" cy="14.6" r="12.2" fill="none" stroke="#777" stroke-width="2"/>
<path d="M14.9,22 L14.9,8.5 M9.8,13.5 L14.9,8.4 L20,13.5" fill="none" stroke="#777" stroke-width="2"/></svg>
<div class="pg" style="left:1436px;width:40px"><svg width="7" height="9" viewBox="0 0 7 9" style="position:absolute;left:16px;top:12.5px"><path d="M5.6,0.8 L1.6,4.5 L5.6,8.2" fill="none" stroke="#4a4a4a" stroke-width="1.15"/></svg></div>
<div class="pg on" style="left:1475px;width:31px">1</div>
<div class="pg" style="left:1505px;width:29px">2</div>
<div class="pg" style="left:1533px;width:30px">3</div>
<div class="pg" style="left:1562px;width:30px">4</div>
<div class="pg" style="left:1591px;width:33px">...</div>
<div class="pg" style="left:1623px;width:39px">12</div>
<div class="pg" style="left:1661px;width:38px"><svg width="7" height="9" viewBox="0 0 7 9" style="position:absolute;left:14.5px;top:12.5px"><path d="M1.4,0.8 L5.4,4.5 L1.4,8.2" fill="none" stroke="#4a4a4a" stroke-width="1.15"/></svg></div>
<div id="ftbar"></div><div id="ft">
<div id="t114" class="fttx" style="left:22px;transform:scaleX(1.0736);transform-origin:0 50%">i-effect<sup style="font-size:9px;vertical-align:5px;line-height:0">®</sup> WebControl</div>
<div id="t115" class="fttx" style="left:790px;transform:scaleX(0.9989);transform-origin:0 50%">Tabelle: EFSRVMAIN&nbsp; ::&nbsp; Datenbankbibliothek: IEFFECTDB&nbsp; ::&nbsp; i-effect: V2R9M0&nbsp; ::&nbsp; System: testfp:443&nbsp; ::&nbsp; Seriennummer: 7810FB0&nbsp; ::&nbsp; Partition: 22 (TESTFP)</div>
</div>
</body></html>
